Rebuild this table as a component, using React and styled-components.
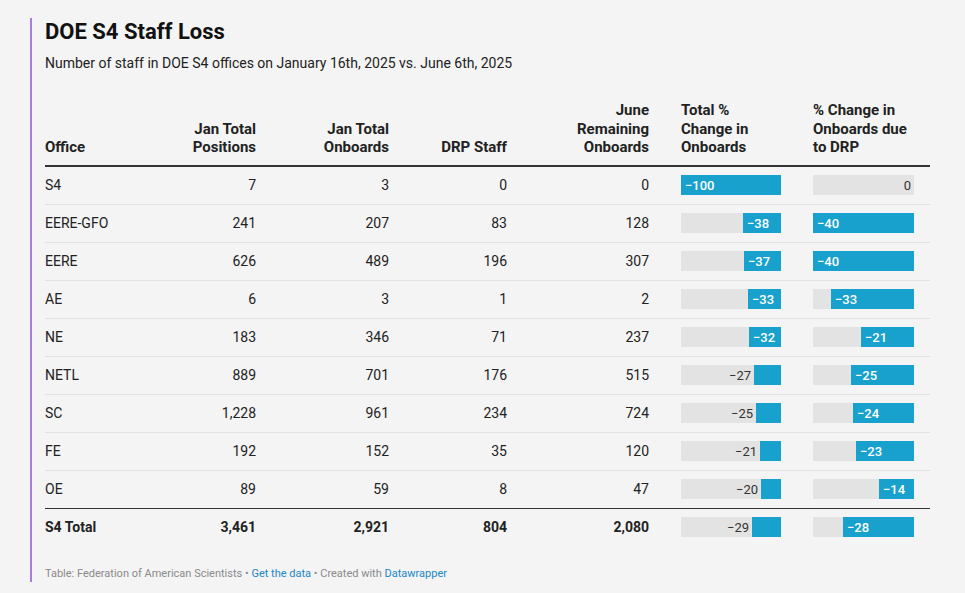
import React from "react"
import styled, { createGlobalStyle } from "styled-components"

const GlobalStyle = createGlobalStyle`
  html, body {
    margin: 0;
    padding: 0;
    background: #f4f4f4;
  }
  body {
    font-family: Roboto, "Liberation Sans", Arial, sans-serif;
    color: #333;
  }
`

const rows = [
  { office: "S4", positions: "7", onboards: "3", drp: "0", june: "0", total: -100, due: 0 },
  { office: "EERE-GFO", positions: "241", onboards: "207", drp: "83", june: "128", total: -38, due: -40 },
  { office: "EERE", positions: "626", onboards: "489", drp: "196", june: "307", total: -37, due: -40 },
  { office: "AE", positions: "6", onboards: "3", drp: "1", june: "2", total: -33, due: -33 },
  { office: "NE", positions: "183", onboards: "346", drp: "71", june: "237", total: -32, due: -21 },
  { office: "NETL", positions: "889", onboards: "701", drp: "176", june: "515", total: -27, due: -25 },
  { office: "SC", positions: "1,228", onboards: "961", drp: "234", june: "724", total: -25, due: -24 },
  { office: "FE", positions: "192", onboards: "152", drp: "35", june: "120", total: -21, due: -23 },
  { office: "OE", positions: "89", onboards: "59", drp: "8", june: "47", total: -20, due: -14 },
]

const totalRow = { office: "S4 Total", positions: "3,461", onboards: "2,921", drp: "804", june: "2,080", total: -29, due: -28 }

const Wrapper = styled.div`
  margin: 18px 0 0 30px;
  width: 900px;
  border-left: 2px solid #a77fd8;
  padding-left: 13px;
`

const Title = styled.h1`
  margin: 0;
  font-size: 22px;
  line-height: 28px;
  font-weight: 700;
  color: #111;
`

const Subtitle = styled.p`
  margin: 7px 0 0;
  font-size: 14px;
  line-height: 20px;
  color: #222;
`

const Grid = styled.div`
  margin-top: 28px;
  width: 885px;
`

const Row = styled.div`
  display: grid;
  grid-template-columns: 111px 100px 133px 118px 142px 132px 149px;
  align-items: ${(p) => (p.$head ? "end" : "center")};
  height: ${(p) => (p.$head ? "auto" : "37px")};
  border-bottom: ${(p) => p.$line || "1px solid #e1e1e1"};
`

const HeadCell = styled.div`
  font-size: 15px;
  line-height: 18.5px;
  font-weight: 700;
  color: #222;
  padding-bottom: 8px;
  text-align: ${(p) => (p.$right ? "right" : "left")};
  padding-left: ${(p) => (p.$bar ? "32px" : "0")};
`

const Cell = styled.div`
  font-size: 14px;
  line-height: 20px;
  color: #222;
  font-weight: ${(p) => (p.$bold ? 700 : 400)};
  text-align: ${(p) => (p.$right ? "right" : "left")};
`

const BarCell = styled.div`
  padding-left: 32px;
`

const Track = styled.div`
  width: ${(p) => p.$w}px;
  height: 20px;
  background: #e3e3e3;
  display: flex;
  justify-content: flex-end;
  align-items: center;
`

const Fill = styled.div`
  height: 100%;
  background: #18a1cd;
  display: flex;
  align-items: center;
  flex-shrink: 0;
`

const InLabel = styled.span`
  color: #fff;
  font-size: 13px;
  font-weight: 500;
  padding-left: 4px;
  white-space: nowrap;
`

const OutLabel = styled.span`
  color: #333;
  font-size: 13px;
  font-weight: 400;
  padding-right: 3px;
  white-space: nowrap;
`

const Footer = styled.div`
  margin-top: 20px;
  font-size: 11px;
  line-height: 16px;
  color: #8a8a8a;
`

const FooterLink = styled.a`
  color: #1a87c7;
  text-decoration: none;
`

const fmt = (v) => (v < 0 ? "\u2212" + Math.abs(v) : String(v))

const Bar = ({ value, max, width }) => {
  const w = Math.round((Math.abs(value) / max) * width)
  const inside = w >= 30
  return (
    <BarCell>
      <Track $w={width}>
        {!inside && <OutLabel>{fmt(value)}</OutLabel>}
        <Fill style={{ width: w }}>{inside && <InLabel>{fmt(value)}</InLabel>}</Fill>
      </Track>
    </BarCell>
  )
}

const DataRow = ({ r, line, bold }) => (
  <Row $line={line}>
    <Cell $bold={bold}>{r.office}</Cell>
    <Cell $right $bold={bold}>{r.positions}</Cell>
    <Cell $right $bold={bold}>{r.onboards}</Cell>
    <Cell $right $bold={bold}>{r.drp}</Cell>
    <Cell $right $bold={bold}>{r.june}</Cell>
    <Bar value={r.total} max={100} width={100} />
    <Bar value={r.due} max={40} width={101} />
  </Row>
)

export default function App() {
  return (
    <>
      <GlobalStyle />
      <Wrapper>
        <Title>DOE S4 Staff Loss</Title>
        <Subtitle>Number of staff in DOE S4 offices on January 16th, 2025 vs. June 6th, 2025</Subtitle>
        <Grid>
          <Row $head $line="2px solid #333">
            <HeadCell>Office</HeadCell>
            <HeadCell $right>Jan Total<br />Positions</HeadCell>
            <HeadCell $right>Jan Total<br />Onboards</HeadCell>
            <HeadCell $right>DRP Staff</HeadCell>
            <HeadCell $right>June<br />Remaining<br />Onboards</HeadCell>
            <HeadCell $bar>Total %<br />Change in<br />Onboards</HeadCell>
            <HeadCell $bar>% Change in<br />Onboards due<br />to DRP</HeadCell>
          </Row>
          {rows.map((r, i) => (
            <DataRow key={r.office} r={r} line={i === rows.length - 1 ? "1px solid #333" : undefined} />
          ))}
          <DataRow r={totalRow} line="none" bold />
        </Grid>
        <Footer>
          Table: Federation of American Scientists • <FooterLink href="#">Get the data</FooterLink> • Created with{" "}
          <FooterLink href="#">Datawrapper</FooterLink>
        </Footer>
      </Wrapper>
    </>
  )
}
